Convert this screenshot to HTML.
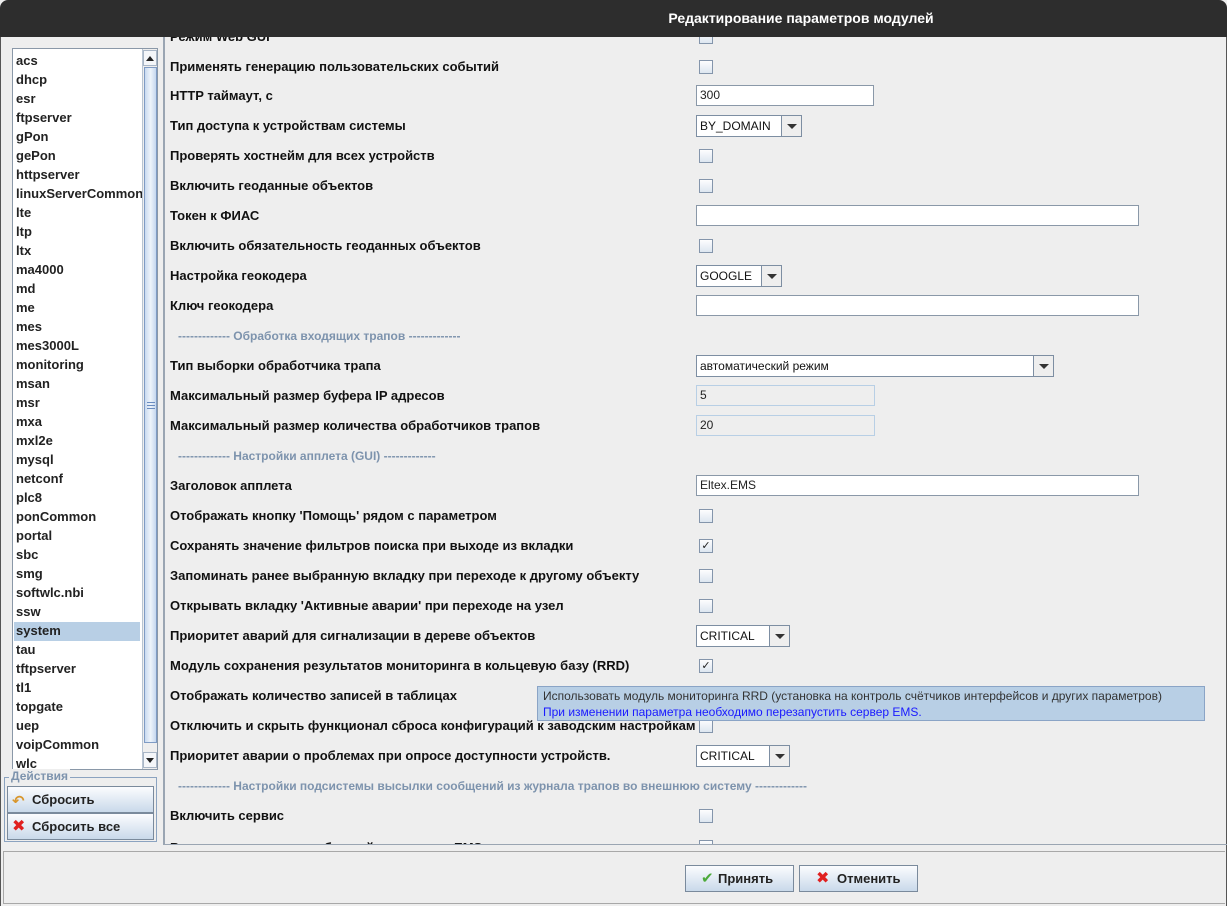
<!DOCTYPE html>
<html><head><meta charset="utf-8"><style>
*{box-sizing:border-box;margin:0;padding:0}
body{width:1227px;height:906px;background:#eeeeee;font-family:"Liberation Sans","DejaVu Sans",sans-serif;position:relative;overflow:hidden}
#title{position:absolute;left:0;top:0;width:1227px;height:37px;background:#2d2d2d;border-radius:8px 8px 0 0;color:#fff;font-weight:bold;font-size:14px;text-align:center;line-height:37px;padding-left:375px}
.a{position:absolute}
.lbl{position:absolute;left:170px;font-size:13px;font-weight:bold;color:#111;white-space:nowrap;line-height:16px}
.sep{position:absolute;left:178px;font-size:12px;font-weight:bold;color:#7d93ad;white-space:nowrap;line-height:16px}
.cb{position:absolute;left:699px;width:14px;height:14px;border:1px solid #8495ab;background:linear-gradient(#fdfdfe,#dde6f0);font-size:11px;line-height:12px;text-align:center;color:#222;font-weight:bold}
.tf{position:absolute;left:696px;height:21px;border:1px solid #8a98a8;background:#fff;font-size:12px;line-height:19px;padding-left:3px;color:#222}
.tf.d{background:#eeeeee;border-color:#b8cfe5}
.cmb{position:absolute;left:696px;height:22px;border:1px solid #7d8ea2;background:#fff;font-size:12px;line-height:20px;padding-left:3px;color:#111}
.cmb .btn{position:absolute;right:0;top:0;width:20px;height:20px;border-left:1px solid #7d8ea2;background:#eeeeee}
.cmb .btn:after{content:"";position:absolute;left:5px;top:8px;border-left:5px solid transparent;border-right:5px solid transparent;border-top:5px solid #333}
#list{position:absolute;left:12px;top:48px;width:146px;height:722px;border:1px solid #8a98a8;background:#fff;overflow:hidden}
#list div{position:absolute;left:3px;font-size:13px;font-weight:bold;color:#222;line-height:16px}
.btn2{position:absolute;border:1px solid #7a8a9c;background:linear-gradient(#fbfcfe,#c9d9ea);font-size:13px;font-weight:bold;color:#222;line-height:25px}
</style></head><body>
<div id="title">Редактирование параметров модулей</div>
<div class="a" style="left:0;top:37px;width:1227px;height:869px;border-left:1px solid #555;border-right:1px solid #555"></div>
<div id="list">
<div style="top:4px">acs</div><div style="top:23px">dhcp</div><div style="top:42px">esr</div><div style="top:61px">ftpserver</div><div style="top:80px">gPon</div><div style="top:99px">gePon</div><div style="top:118px">httpserver</div><div style="top:137px">linuxServerCommon</div><div style="top:156px">lte</div><div style="top:175px">ltp</div><div style="top:194px">ltx</div><div style="top:213px">ma4000</div><div style="top:232px">md</div><div style="top:251px">me</div><div style="top:270px">mes</div><div style="top:289px">mes3000L</div><div style="top:308px">monitoring</div><div style="top:327px">msan</div><div style="top:346px">msr</div><div style="top:365px">mxa</div><div style="top:384px">mxl2e</div><div style="top:403px">mysql</div><div style="top:422px">netconf</div><div style="top:441px">plc8</div><div style="top:460px">ponCommon</div><div style="top:479px">portal</div><div style="top:498px">sbc</div><div style="top:517px">smg</div><div style="top:536px">softwlc.nbi</div><div style="top:555px">ssw</div>
<div style="top:573px;left:1px;width:126px;height:19px;background:#b8cfe5"></div>
<div style="top:574px">system</div><div style="top:593px">tau</div><div style="top:612px">tftpserver</div><div style="top:631px">tl1</div><div style="top:650px">topgate</div><div style="top:669px">uep</div><div style="top:688px">voipCommon</div><div style="top:707px">wlc</div>
<div style="left:129px;top:0;width:16px;height:720px;background:#eeeeee;border-left:1px solid #b8c4d2"></div>
<div style="left:130px;top:1px;width:14px;height:16px;background:#f4f6f9;border:1px solid #a9b6c6"></div>
<div style="left:133px;top:7px;width:0;height:0;border-left:4px solid transparent;border-right:4px solid transparent;border-bottom:5px solid #222"></div>
<div style="left:131px;top:18px;width:13px;height:676px;background:linear-gradient(90deg,#c9daf0,#eef4fb,#c5d7ee);border:1px solid #7f9bc4"></div>
<div style="left:134px;top:353px;width:8px;height:1px;background:#6a8cc0"></div><div style="left:134px;top:356px;width:8px;height:1px;background:#6a8cc0"></div><div style="left:134px;top:359px;width:8px;height:1px;background:#6a8cc0"></div>
<div style="left:130px;top:703px;width:14px;height:16px;background:#f4f6f9;border:1px solid #a9b6c6"></div>
<div style="left:133px;top:709px;width:0;height:0;border-left:4px solid transparent;border-right:4px solid transparent;border-top:5px solid #222"></div>
</div>
<div class="a" style="left:4px;top:777px;width:153px;height:65px;border:1px solid #8ba3c0"></div>
<div class="a" style="left:9px;top:769px;background:#eeeeee;padding:0 2px;font-size:12px;font-weight:bold;color:#7d93ad">Действия</div>
<div class="btn2" style="left:7px;top:786px;width:147px;height:27px;padding-left:24px">Сбросить</div>
<div class="a" style="left:12px;top:792px;color:#d8962c;font-size:15px;font-weight:bold">↶</div>
<div class="btn2" style="left:7px;top:813px;width:147px;height:27px;padding-left:24px">Сбросить все</div>
<div class="a" style="left:12px;top:816px;color:#e02020;font-size:16px;font-weight:bold">✖</div>
<div class="a" style="left:163px;top:37px;width:1064px;height:808px;border-left:2px solid #9aa5b2;border-bottom:1px solid #9aa5b2;overflow:hidden">
<div style="position:absolute;left:-165px;top:-37px;width:1227px;height:906px">
<div class="lbl" style="top:29px">Режим Web GUI</div><div class="cb" style="top:30px"></div>
<div class="lbl" style="top:59px">Применять генерацию пользовательских событий</div><div class="cb" style="top:60px"></div>
<div class="lbl" style="top:88px">HTTP таймаут, с</div><div class="tf" style="top:85px;width:178px">300</div>
<div class="lbl" style="top:118px">Тип доступа к устройствам системы</div><div class="cmb" style="top:115px;width:106px">BY_DOMAIN<div class="btn"></div></div>
<div class="lbl" style="top:148px">Проверять хостнейм для всех устройств</div><div class="cb" style="top:149px"></div>
<div class="lbl" style="top:178px">Включить геоданные объектов</div><div class="cb" style="top:179px"></div>
<div class="lbl" style="top:208px">Токен к ФИАС</div><div class="tf" style="top:205px;width:443px"></div>
<div class="lbl" style="top:238px">Включить обязательность геоданных объектов</div><div class="cb" style="top:239px"></div>
<div class="lbl" style="top:268px">Настройка геокодера</div><div class="cmb" style="top:265px;width:86px">GOOGLE<div class="btn"></div></div>
<div class="lbl" style="top:298px">Ключ геокодера</div><div class="tf" style="top:295px;width:443px"></div>
<div class="sep" style="top:328px">------------- Обработка входящих трапов -------------</div>
<div class="lbl" style="top:358px">Тип выборки обработчика трапа</div><div class="cmb" style="top:355px;width:358px">автоматический режим<div class="btn"></div></div>
<div class="lbl" style="top:388px">Максимальный размер буфера IP адресов</div><div class="tf d" style="top:385px;width:179px">5</div>
<div class="lbl" style="top:418px">Максимальный размер количества обработчиков трапов</div><div class="tf d" style="top:415px;width:179px">20</div>
<div class="sep" style="top:448px">------------- Настройки апплета (GUI) -------------</div>
<div class="lbl" style="top:478px">Заголовок апплета</div><div class="tf" style="top:475px;width:443px">Eltex.EMS</div>
<div class="lbl" style="top:508px">Отображать кнопку 'Помощь' рядом с параметром</div><div class="cb" style="top:509px"></div>
<div class="lbl" style="top:538px">Сохранять значение фильтров поиска при выходе из вкладки</div><div class="cb" style="top:539px">✓</div>
<div class="lbl" style="top:568px">Запоминать ранее выбранную вкладку при переходе к другому объекту</div><div class="cb" style="top:569px"></div>
<div class="lbl" style="top:598px">Открывать вкладку 'Активные аварии' при переходе на узел</div><div class="cb" style="top:599px"></div>
<div class="lbl" style="top:628px">Приоритет аварий для сигнализации в дереве объектов</div><div class="cmb" style="top:625px;width:94px">CRITICAL<div class="btn"></div></div>
<div class="lbl" style="top:658px">Модуль сохранения результатов мониторинга в кольцевую базу (RRD)</div><div class="cb" style="top:659px">✓</div>
<div class="lbl" style="top:688px">Отображать количество записей в таблицах</div>
<div class="lbl" style="top:718px">Отключить и скрыть функционал сброса конфигураций к заводским настройкам</div><div class="cb" style="top:719px"></div>
<div class="lbl" style="top:748px">Приоритет аварии о проблемах при опросе доступности устройств.</div><div class="cmb" style="top:745px;width:94px">CRITICAL<div class="btn"></div></div>
<div class="sep" style="top:778px">------------- Настройки подсистемы высылки сообщений из журнала трапов во внешнюю систему -------------</div>
<div class="lbl" style="top:808px">Включить сервис</div><div class="cb" style="top:809px"></div>
<div class="lbl" style="top:840px">Включить отправку сообщений из журнала EMS</div><div class="cb" style="top:840px"></div>
</div></div>
<div class="a" style="left:537px;top:686px;width:668px;height:35px;background:#b8cfe5;border:1px solid #8aa4c6;font-size:12px;line-height:16px;padding:1px 0 0 5px;white-space:nowrap">
<div style="color:#333">Использовать модуль мониторинга RRD (установка на контроль счётчиков интерфейсов и других параметров)</div>
<div style="color:#1a1aff">При изменении параметра необходимо перезапустить сервер EMS.</div>
</div>
<div class="a" style="left:3px;top:851px;width:1222px;height:53px;border:1px solid #a8a8a8;border-right:none"></div>
<div class="btn2" style="left:685px;top:865px;width:109px;height:27px;padding-left:32px">Принять</div>
<div class="a" style="left:701px;top:869px;color:#4caa3a;font-size:15px;font-weight:bold">✔</div>
<div class="btn2" style="left:799px;top:865px;width:119px;height:27px;padding-left:37px">Отменить</div>
<div class="a" style="left:816px;top:868px;color:#e02020;font-size:16px;font-weight:bold">✖</div>
</body></html>
